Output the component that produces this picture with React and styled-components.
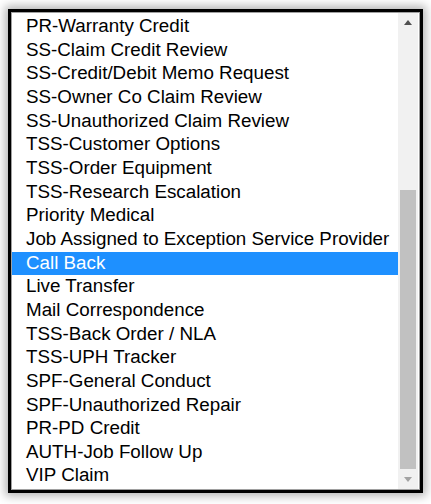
import React from "react";
import styled, { createGlobalStyle } from "styled-components";

const GlobalStyle = createGlobalStyle`
    html, body {
        margin: 0;
        padding: 0;
        background: #fff;
    }
    body {
        font-family: "Liberation Sans", Arial, sans-serif;
    }
`

const Page = styled.div`
    width: 431px;
    height: 504px;
    padding: 9px 0 0 8px;
    box-sizing: border-box;
`

const Frame = styled.div`
    width: 415px;
    height: 484px;
    box-sizing: border-box;
    border: 3px solid #000;
    box-shadow: 0 0 9px 3px rgba(0, 0, 0, 0.3);
    background: #fff;
`

const Inner = styled.div`
    height: 100%;
    box-sizing: border-box;
    border: 1px solid #a0a0a0;
    display: flex;
`

const List = styled.div`
    flex: 1;
    padding-top: 2px;
    overflow: hidden;
`

const Option = styled.div`
    height: 23.67px;
    line-height: 22.5px;
    padding-left: 14px;
    font-size: 18.8px;
    white-space: nowrap;
    color: ${props => props.selected ? "#fff" : "#000"};
    background: ${props => props.selected ? "#1e90ff" : "transparent"};
`

const Scrollbar = styled.div`
    width: 20px;
    margin-right: 1px;
    background: #f1f1f1;
    display: flex;
    flex-direction: column;
`

const Arrow = styled.div`
    height: 19px;
    display: flex;
    align-items: center;
    justify-content: center;
`

const Track = styled.div`
    flex: 1;
    display: flex;
    flex-direction: column;
    justify-content: flex-end;
    padding: 0 2px 1px;
`

const Thumb = styled.div`
    height: 279px;
    background: #c1c1c1;
`

const options = [
    "PR-Warranty Credit",
    "SS-Claim Credit Review",
    "SS-Credit/Debit Memo Request",
    "SS-Owner Co Claim Review",
    "SS-Unauthorized Claim Review",
    "TSS-Customer Options",
    "TSS-Order Equipment",
    "TSS-Research Escalation",
    "Priority Medical",
    "Job Assigned to Exception Service Provider",
    "Call Back",
    "Live Transfer",
    "Mail Correspondence",
    "TSS-Back Order / NLA",
    "TSS-UPH Tracker",
    "SPF-General Conduct",
    "SPF-Unauthorized Repair",
    "PR-PD Credit",
    "AUTH-Job Follow Up",
    "VIP Claim"
];

export default function App() {
    return (
        <Page>
            <GlobalStyle />
            <Frame>
                <Inner>
                    <List>
                        {options.map(o => (
                            <Option key={o} selected={o === "Call Back"}>{o}</Option>
                        ))}
                    </List>
                    <Scrollbar>
                        <Arrow>
                            <svg width="8" height="5" viewBox="0 0 8 5">
                                <path d="M0 5 L4 0 L8 5 Z" fill="#505050" />
                            </svg>
                        </Arrow>
                        <Track>
                            <Thumb />
                        </Track>
                        <Arrow>
                            <svg width="8" height="5" viewBox="0 0 8 5">
                                <path d="M0 0 L8 0 L4 5 Z" fill="#a3a3a3" />
                            </svg>
                        </Arrow>
                    </Scrollbar>
                </Inner>
            </Frame>
        </Page>
    );
}
